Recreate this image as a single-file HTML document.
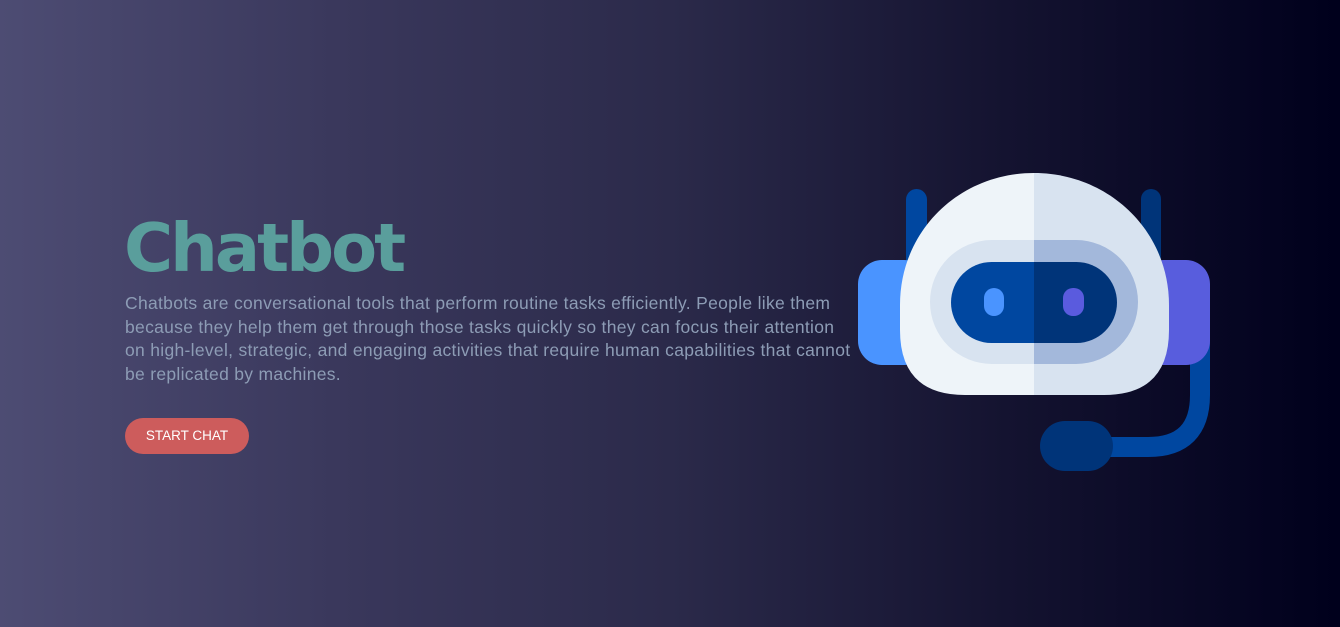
<!DOCTYPE html>
<html><head><meta charset="utf-8"><style>
html,body{margin:0;padding:0;width:1340px;height:627px;overflow:hidden}
body{background:linear-gradient(90deg,#4d4c73 0%,#3a385c 25%,#2b2a4a 50%,#141330 75%,#00001c 100%);font-family:"Liberation Sans",sans-serif;position:relative}
h1{position:absolute;left:124px;top:203px;margin:0;font-family:"DejaVu Sans",sans-serif;font-size:67px;font-weight:bold;color:#5a9e9c;line-height:90px;letter-spacing:-3px}
p{position:absolute;left:125px;top:292px;margin:0;font-size:17.5px;line-height:23.5px;color:#8d9cb5;white-space:nowrap;letter-spacing:0.3px}
.btn{position:absolute;left:125px;top:418px;width:124px;height:36px;border-radius:18px;background:#cd5c5c;color:#fff;font-size:13.5px;line-height:36px;text-align:center}
svg{position:absolute;left:0;top:0}
</style></head><body>
<h1>Chatbot</h1>
<p>Chatbots are conversational tools that perform routine tasks efficiently. People like them<br>because they help them get through those tasks quickly so they can focus their attention<br>on high-level, strategic, and engaging activities that require human capabilities that cannot<br>be replicated by machines.</p>
<div class="btn">START CHAT</div>
<svg width="1340" height="627">
<defs>
<clipPath id="L"><rect x="0" y="0" width="1034" height="627"/></clipPath>
<clipPath id="R"><rect x="1034" y="0" width="306" height="627"/></clipPath>
</defs>
<rect x="906" y="189" width="21" height="90" rx="10.5" fill="#0047a0"/>
<rect x="1141" y="189" width="20" height="90" rx="10" fill="#003479"/>
<path d="M1200,330 L1200,395 Q1200,447 1148,447 L1090,447" fill="none" stroke="#0047a0" stroke-width="20"/>
<rect x="1040" y="421" width="73" height="50" rx="25" fill="#003479"/>
<rect x="858" y="260" width="70" height="105" rx="24" fill="#4a94ff"/>
<rect x="1140" y="260" width="70" height="105" rx="24" fill="#585ddd"/>
<g clip-path="url(#L)">
<path d="M900,330 L900,305 C900,230 960,173 1034,173 C1108,173 1169,230 1169,305 L1169,330 Q1169,395 1104,395 L965,395 Q900,395 900,330 Z" fill="#eef4f9"/>
<rect x="930" y="240" width="208" height="124" rx="62" fill="#d8e3f0"/>
<rect x="951" y="262" width="166" height="81" rx="40.5" fill="#0047a0"/>
</g>
<g clip-path="url(#R)">
<path d="M900,330 L900,305 C900,230 960,173 1034,173 C1108,173 1169,230 1169,305 L1169,330 Q1169,395 1104,395 L965,395 Q900,395 900,330 Z" fill="#d8e3f0"/>
<rect x="930" y="240" width="208" height="124" rx="62" fill="#a3b8db"/>
<rect x="951" y="262" width="166" height="81" rx="40.5" fill="#003479"/>
</g>
<rect x="984" y="288" width="20" height="28" rx="10" fill="#4a94ff"/>
<rect x="1063" y="288" width="21" height="28" rx="10" fill="#5a5bde"/>
</svg>
</body></html>
